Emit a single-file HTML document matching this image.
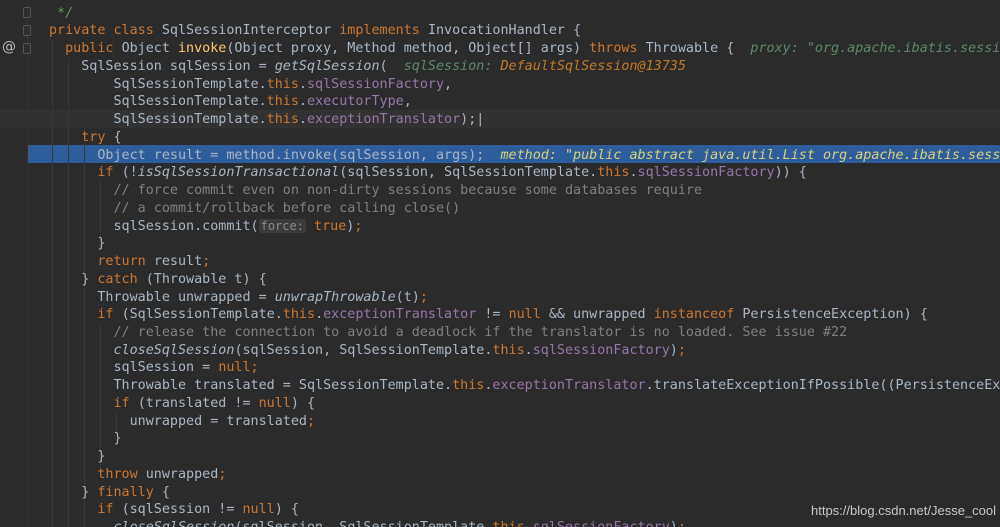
<!DOCTYPE html>
<html><head><meta charset="utf-8"><style>
html,body{margin:0;padding:0;background:#2b2b2b;width:1000px;height:527px;overflow:hidden}
#ed{position:absolute;left:0;top:0;width:1000px;height:527px;overflow:hidden}
.l{position:absolute;left:0;width:1000px;height:17.74px;line-height:17.74px;font-family:"DejaVu Sans Mono","Liberation Mono",monospace;font-size:13.4px;color:#a9b7c6;white-space:pre}
.l .t{position:absolute;left:49px;top:1.5px}
.k{color:#cc7832}.f{color:#9876aa}.c{color:#808080}.m{color:#ffc66d}.i{font-style:italic}
.h{color:#5d8a6b;font-style:italic}.hv{color:#c27a2a;font-style:italic}
.hy{color:#d9d27a;font-style:italic}
.p{color:#8a8a8a;background:#3b3b3b;border-radius:3px;font-size:12px;padding:0 2px}
.sel{background:#2e5d9b}
.cur{background:#323232}
.g{position:absolute;width:1px;background:#383838}
.fold{position:absolute;left:23px;width:8px;height:11px;border:1px solid #555;border-radius:2px;box-sizing:border-box}
</style></head><body><div id="ed">
<div class="l cur" style="top:110.3px"></div>
<div class="l sel" style="top:145.2px;left:27px"></div>
<div class="g" style="left:52px;top:40px;height:487px"></div>
<div class="g" style="left:68px;top:57px;height:470px"></div>
<div class="g" style="left:84px;top:128px;height:399px"></div>
<div class="g" style="left:100px;top:180px;height:60px"></div>
<div class="g" style="left:100px;top:323px;height:145px"></div>
<div class="g" style="left:116px;top:412px;height:20px"></div>
<div class="g" style="left:27px;top:0;height:527px;background:#333"></div>
<div class="fold" style="top:7px"></div>
<div class="fold" style="top:25px"></div>
<div class="fold" style="top:43px"></div>
<div style="position:absolute;left:2px;top:39px;color:#bbb;font:14px 'DejaVu Sans',sans-serif">@</div>
<div style="position:absolute;left:70px;top:-4px;width:22px;height:3px;background:#5a9b3c"></div>
<div style="position:absolute;left:220px;top:-4px;width:22px;height:3px;background:#5a9b3c"></div>

<div class="l" style="top:3.1px"><span class="t"><span style="color:#629755;font-style:italic"> */</span></span></div>
<div class="l" style="top:20.9px"><span class="t"><span class="k">private class </span>SqlSessionInterceptor <span class="k">implements </span>InvocationHandler {</span></div>
<div class="l" style="top:38.6px"><span class="t">  <span class="k">public </span>Object <span class="m">invoke</span>(Object proxy, Method method, Object[] args) <span class="k">throws </span>Throwable {  <span class="h">proxy: "org.apache.ibatis.session.defaults</span></span></div>
<div class="l" style="top:56.3px"><span class="t">    SqlSession sqlSession = <span class="i">getSqlSession</span>(  <span class="h">sqlSession: </span><span class="hv">DefaultSqlSession@13735</span></span></div>
<div class="l" style="top:74.1px"><span class="t">        SqlSessionTemplate.<span class="k">this</span>.<span class="f">sqlSessionFactory</span>,</span></div>
<div class="l" style="top:91.8px"><span class="t">        SqlSessionTemplate.<span class="k">this</span>.<span class="f">executorType</span>,</span></div>
<div class="l" style="top:109.6px"><span class="t">        SqlSessionTemplate.<span class="k">this</span>.<span class="f">exceptionTranslator</span>);|</span></div>
<div class="l" style="top:127.3px"><span class="t">    <span class="k">try </span>{</span></div>
<div class="l" style="top:145.0px"><span class="t">      Object result = method.invoke(sqlSession, args);  <span class="hy">method: "public abstract java.util.List org.apache.ibatis.session</span></span></div>
<div class="l" style="top:162.8px"><span class="t">      <span class="k">if </span>(!<span class="i">isSqlSessionTransactional</span>(sqlSession, SqlSessionTemplate.<span class="k">this</span>.<span class="f">sqlSessionFactory</span>)) {</span></div>
<div class="l" style="top:180.5px"><span class="t">        <span class="c">// force commit even on non-dirty sessions because some databases require</span></span></div>
<div class="l" style="top:198.3px"><span class="t">        <span class="c">// a commit/rollback before calling close()</span></span></div>
<div class="l" style="top:216.0px"><span class="t">        sqlSession.commit(<span class="p">force:</span> <span class="k">true</span>)<span class="k">;</span></span></div>
<div class="l" style="top:233.7px"><span class="t">      }</span></div>
<div class="l" style="top:251.5px"><span class="t">      <span class="k">return </span>result<span class="k">;</span></span></div>
<div class="l" style="top:269.2px"><span class="t">    } <span class="k">catch </span>(Throwable t) {</span></div>
<div class="l" style="top:287.0px"><span class="t">      Throwable unwrapped = <span class="i">unwrapThrowable</span>(t)<span class="k">;</span></span></div>
<div class="l" style="top:304.7px"><span class="t">      <span class="k">if </span>(SqlSessionTemplate.<span class="k">this</span>.<span class="f">exceptionTranslator </span>!= <span class="k">null </span>&amp;&amp; unwrapped <span class="k">instanceof </span>PersistenceException) {</span></div>
<div class="l" style="top:322.4px"><span class="t">        <span class="c">// release the connection to avoid a deadlock if the translator is no loaded. See issue #22</span></span></div>
<div class="l" style="top:340.2px"><span class="t">        <span class="i">closeSqlSession</span>(sqlSession, SqlSessionTemplate.<span class="k">this</span>.<span class="f">sqlSessionFactory</span>)<span class="k">;</span></span></div>
<div class="l" style="top:357.9px"><span class="t">        sqlSession = <span class="k">null;</span></span></div>
<div class="l" style="top:375.7px"><span class="t">        Throwable translated = SqlSessionTemplate.<span class="k">this</span>.<span class="f">exceptionTranslator</span>.translateExceptionIfPossible((PersistenceException) unwrapped);</span></div>
<div class="l" style="top:393.4px"><span class="t">        <span class="k">if </span>(translated != <span class="k">null</span>) {</span></div>
<div class="l" style="top:411.1px"><span class="t">          unwrapped = translated<span class="k">;</span></span></div>
<div class="l" style="top:428.9px"><span class="t">        }</span></div>
<div class="l" style="top:446.6px"><span class="t">      }</span></div>
<div class="l" style="top:464.4px"><span class="t">      <span class="k">throw </span>unwrapped<span class="k">;</span></span></div>
<div class="l" style="top:482.1px"><span class="t">    } <span class="k">finally </span>{</span></div>
<div class="l" style="top:499.8px"><span class="t">      <span class="k">if </span>(sqlSession != <span class="k">null</span>) {</span></div>
<div class="l" style="top:517.6px"><span class="t">        <span class="i">closeSqlSession</span>(sqlSession, SqlSessionTemplate.<span class="k">this</span>.<span class="f">sqlSessionFactory</span>)<span class="k">;</span></span></div>
<div style="position:absolute;left:811px;top:503px;font:13px 'Liberation Sans',sans-serif;color:#c8c8c8">https://blog.csdn.net/Jesse_cool</div>
</div></body></html>
